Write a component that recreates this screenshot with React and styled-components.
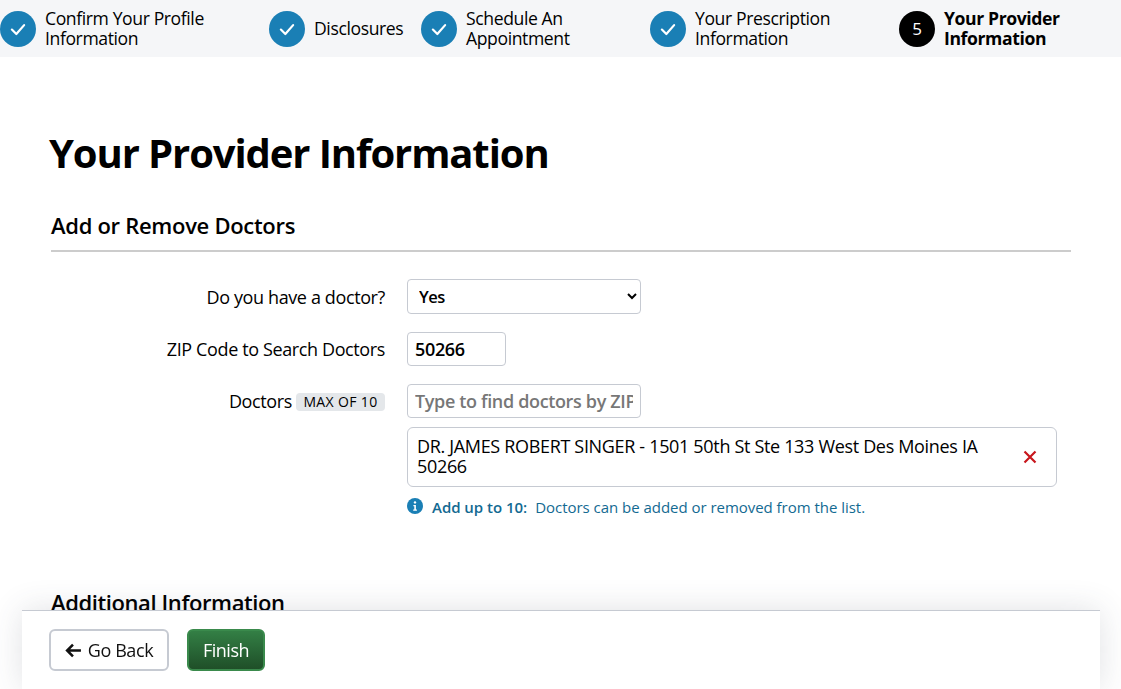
import React from "react"
import styled, { createGlobalStyle } from "styled-components"

const FONT = `"Open Sans", "Noto Sans", "Liberation Sans", sans-serif`

const GlobalStyle = createGlobalStyle`
  html, body {
    margin: 0;
    height: 100%;
    overflow: hidden;
    background: #fff;
    font-family: ${FONT};
    color: #000;
  }
  * { box-sizing: border-box; }
`

const Stepper = styled.ol`
  display: flex;
  margin: 0;
  padding: 0;
  height: 57px;
  list-style: none;
  background: #f5f6f8;
  align-items: center;
`

const Step = styled.li`
  display: flex;
  align-items: center;
  gap: 9px;
  width: ${p => p.$width}px;
  font-size: 17.6px;
  line-height: 20px;
  letter-spacing: -0.4px;
  font-weight: ${p => (p.$current ? 700 : 400)};
`

const StepLabel = styled.span`
  width: ${p => p.$width || "auto"};
  margin-top: -1px;
`

const Circle = styled.span`
  flex: none;
  width: 36px;
  height: 36px;
  border-radius: 50%;
  display: flex;
  align-items: center;
  justify-content: center;
  color: #fff;
  font-size: 17px;
  font-weight: 400;
  background: ${p => (p.$current ? "#000" : "#1a7fb5")};
`

const Main = styled.main`
  padding: 69px 50px 0 51px;
`

const PageTitle = styled.h1`
  margin: 0 0 0 -2px;
  font-size: 40px;
  line-height: 54px;
  font-weight: 700;
  letter-spacing: -1.1px;
`

const SectionTitle = styled.h2`
  margin: 0;
  font-size: 22px;
  line-height: 30px;
  font-weight: 600;
  letter-spacing: -0.3px;
`

const AddRemoveTitle = styled(SectionTitle)`
  margin-top: 30px;
  padding-bottom: 10px;
  border-bottom: 2px solid #ccc;
`

const AdditionalTitle = styled(SectionTitle)`
  margin-top: 70px;
  letter-spacing: -0.4px;
`

const Form = styled.div`
  display: grid;
  grid-template-columns: 334px 650px;
  column-gap: 22px;
  margin-top: 27px;
`

const Label = styled.label`
  display: flex;
  justify-content: flex-end;
  align-items: center;
  gap: 4px;
  height: ${p => p.$height || 35}px;
  margin-bottom: ${p => p.$gap ?? 18}px;
  font-size: 18px;
  letter-spacing: -0.38px;
`

const Field = styled.div`
  margin-bottom: ${p => p.$gap ?? 18}px;
`

const Badge = styled.span`
  display: inline-block;
  padding: 0 7.5px;
  height: 18px;
  line-height: 18px;
  margin-top: 2px;
  border-radius: 4px;
  background: #e4e7ea;
  font-size: 14px;
  letter-spacing: 0.35px;
`

const Select = styled.select`
  display: block;
  width: 234px;
  height: 35px;
  padding: 0 4px 0 7px;
  background: #fff;
  border: 1px solid #c6cad2;
  border-radius: 4px;
  font-family: ${FONT};
  font-size: 16.5px;
  font-weight: 600;
  letter-spacing: -0.5px;
  color: #000;
`

const Input = styled.input`
  display: block;
  width: ${p => p.$width}px;
  height: 34px;
  padding: 0 7px;
  border: 1px solid #c6cad2;
  border-radius: 4px;
  font-family: ${FONT};
  font-size: 18px;
  font-weight: 600;
  letter-spacing: -0.35px;
  color: #000;
  &::placeholder {
    color: #777;
    opacity: 1;
  }
`

const DoctorCard = styled.div`
  display: flex;
  align-items: center;
  justify-content: space-between;
  width: 650px;
  height: 60px;
  padding: 0 19px 0 9px;
  margin-top: 9px;
  border: 1px solid #c6cad2;
  border-radius: 6px;
  font-size: 18px;
  line-height: 20px;
  letter-spacing: -0.33px;
`

const DoctorName = styled.span`
  width: 575px;
  margin-top: -2px;
`

const RemoveButton = styled.button`
  display: flex;
  padding: 0;
  border: 0;
  background: none;
  color: #c8161d;
`

const Help = styled.p`
  display: flex;
  align-items: center;
  margin: 10px 0 0;
  height: 20px;
  font-size: 15px;
  letter-spacing: -0.03px;
  color: #136a92;
`

const HelpIcon = styled.svg`
  width: 16px;
  height: 16px;
  margin: -3px 9px 0 0;
  flex: none;
`

const HelpStrong = styled.strong`
  font-weight: 600;
  margin-right: 8px;
`

const Footer = styled.footer`
  position: fixed;
  left: 22px;
  right: 21px;
  bottom: 0;
  height: 79px;
  display: flex;
  align-items: flex-start;
  gap: 18px;
  padding: 18px 27px 0;
  background: #fff;
  border-top: 1px solid #c6cad2;
  box-shadow: 0 0 32px rgba(60, 70, 90, 0.16);
`

const BackButton = styled.button`
  display: flex;
  align-items: center;
  justify-content: center;
  gap: 6px;
  width: 120px;
  height: 42px;
  background: #fff;
  border: 2px solid #c6cad2;
  border-radius: 6px;
  font-family: ${FONT};
  font-size: 18px;
  letter-spacing: -0.4px;
  color: #111;
`

const FinishButton = styled.button`
  width: 78px;
  height: 42px;
  border: 2px solid #3a8a4c;
  border-radius: 6px;
  background: linear-gradient(#337f45, #1f4f28);
  font-family: ${FONT};
  font-size: 18px;
  letter-spacing: -0.5px;
  color: #fff;
`

const steps = [
  { label: "Confirm Your Profile Information", width: 269, textWidth: "180px" },
  { label: "Disclosures", width: 152 },
  { label: "Schedule An Appointment", width: 229, textWidth: "120px" },
  { label: "Your Prescription Information", width: 249, textWidth: "150px" },
]

const Check = () => (
  <svg width="20" height="20" viewBox="0 0 18 18" fill="none" stroke="#fff" strokeWidth="2" strokeLinecap="round" strokeLinejoin="round">
    <path d="M3.5 9.5 7.5 13.5 14.5 5.5" />
  </svg>
)

const App = () => {
  return (
    <>
      <GlobalStyle />
      <Stepper>
        {steps.map(step => (
          <Step key={step.label} $width={step.width}>
            <Circle>
              <Check />
            </Circle>
            <StepLabel $width={step.textWidth}>{step.label}</StepLabel>
          </Step>
        ))}
        <Step $width={222} $current>
          <Circle $current>5</Circle>
          <StepLabel $width="130px">Your Provider Information</StepLabel>
        </Step>
      </Stepper>
      <Main>
        <PageTitle>Your Provider Information</PageTitle>
        <AddRemoveTitle>Add or Remove Doctors</AddRemoveTitle>
        <Form>
          <Label>Do you have a doctor?</Label>
          <Field>
            <Select defaultValue="Yes">
              <option>Yes</option>
              <option>No</option>
            </Select>
          </Field>
          <Label $height={34}>ZIP Code to Search Doctors</Label>
          <Field>
            <Input $width={99} defaultValue="50266" />
          </Field>
          <Label $height={34} $gap={0}>
            Doctors <Badge>MAX OF 10</Badge>
          </Label>
          <Field $gap={0}>
            <Input $width={234} placeholder="Type to find doctors by ZIP Code" />
            <DoctorCard>
              <DoctorName>DR. JAMES ROBERT SINGER - 1501 50th St Ste 133 West Des Moines IA 50266</DoctorName>
              <RemoveButton aria-label="Remove">
                <svg width="14" height="14" viewBox="0 0 14 14" fill="none" stroke="currentColor" strokeWidth="2.2">
                  <path d="M1.5 1.5 12.5 12.5M12.5 1.5 1.5 12.5" />
                </svg>
              </RemoveButton>
            </DoctorCard>
            <Help>
              <HelpIcon viewBox="0 0 16 16">
                <circle cx="8" cy="8" r="8" fill="#1a7fb5" />
                <circle cx="8" cy="4.4" r="1.2" fill="#fff" />
                <path d="M6.4 7h2.5v4.6h1v1.2H6.2v-1.2h1.1V8.2h-.9z" fill="#fff" />
              </HelpIcon>
              <HelpStrong>Add up to 10:</HelpStrong>
              Doctors can be added or removed from the list.
            </Help>
          </Field>
        </Form>
        <AdditionalTitle>Additional Information</AdditionalTitle>
      </Main>
      <Footer>
        <BackButton>
          <svg width="17" height="15" viewBox="0 0 16 14" fill="none" stroke="#111" strokeWidth="2.4">
            <path d="M15 7H2M7.5 1.5 2 7l5.5 5.5" />
          </svg>
          Go Back
        </BackButton>
        <FinishButton>Finish</FinishButton>
      </Footer>
    </>
  )
}

export default App
